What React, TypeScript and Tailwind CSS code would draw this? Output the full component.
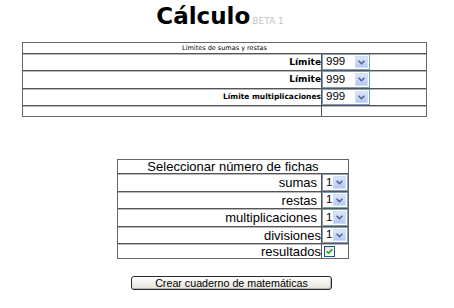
import React from "react";

function Arrow() {
  return (
    <div className="flex h-full w-[13px] items-center justify-center border border-[#d2ddf8] bg-gradient-to-b from-[#dbe5fc] to-[#b6c9f4]">
      <svg width="7" height="5" viewBox="0 0 7 5">
        <path d="M0.6 0.8 L3.5 3.7 L6.4 0.8" fill="none" stroke="#4d6185" strokeWidth="1.5" />
      </svg>
    </div>
  );
}

function Select({ value, w }: { value: string; w: string }) {
  return (
    <div className={`flex h-full items-center border border-[#7f9db9] bg-white p-[1px] ${w}`}>
      <span className="flex-1 pl-[2px] font-['Liberation_Sans',Arial,sans-serif] text-[11.5px] leading-none text-black">
        {value}
      </span>
      <Arrow />
    </div>
  );
}

function TopRow({ label, h, size }: { label: string; h: string; size: string }) {
  return (
    <div className={`flex border-t border-[#555] shadow-[inset_0_1px_0_#b8b8b8] ${h}`}>
      <div
        className={`flex flex-1 items-center justify-end font-['DejaVu_Sans',sans-serif] font-bold leading-none ${size}`}
      >
        {label}
      </div>
      <div className="w-[105px] border-l border-[#555]">
        <Select value="999" w="w-[48px]" />
      </div>
    </div>
  );
}

function BottomRow({ label, h, pad, check }: { label: string; h: string; pad: string; check?: boolean }) {
  return (
    <div className={`flex border-t border-[#555] shadow-[inset_0_1px_0_#b8b8b8] ${h}`}>
      <div
        className={`flex flex-1 items-center justify-end font-['Liberation_Sans',Arial,sans-serif] text-[13px] leading-none ${pad}`}
      >
        {label}
      </div>
      <div className="flex w-[27px] items-center border-l border-[#555]">
        {check ? (
          <div className="ml-[2px] flex h-[11px] w-[11px] items-center justify-center border border-[#1c5180] bg-gradient-to-br from-[#e0e0da] to-white">
            <svg width="7" height="7" viewBox="0 0 7 7">
              <path d="M0.8 3.4 L2.6 5.2 L6.2 1.4" fill="none" stroke="#21a121" strokeWidth="1.6" />
            </svg>
          </div>
        ) : (
          <Select value="1" w="w-[26px]" />
        )}
      </div>
    </div>
  );
}

export default function App() {
  return (
    <div className="h-[308px] w-[454px] bg-white text-black">
      <div className="flex items-baseline justify-center pt-[4px] pr-[14px] leading-none">
        <span className="font-['DejaVu_Sans',sans-serif] text-[23px] font-bold leading-[24px]">Cálculo</span>
        <span className="ml-[2px] font-['DejaVu_Sans',sans-serif] text-[9px] text-[#c4c4c4]">BETA 1</span>
      </div>

      <div className="ml-[22px] mt-[14px] w-[405px] border border-[#666]">
        <div className="flex h-[10px] items-center justify-center font-['DejaVu_Sans',sans-serif] text-[6.5px] leading-none">
          Límites de sumas y restas
        </div>
        <TopRow label="Límite" h="h-[17px]" size="text-[9px]" />
        <TopRow label="Límite" h="h-[18px]" size="text-[9px]" />
        <TopRow label="Límite multiplicaciones" h="h-[17px]" size="text-[7.5px]" />
        <div className="flex h-[11px] border-t border-[#555] shadow-[inset_0_1px_0_#b8b8b8]">
          <div className="flex-1" />
          <div className="w-[105px] border-l border-[#555]" />
        </div>
      </div>

      <div className="ml-[117px] mt-[42px] w-[232px] border border-[#666]">
        <div className="flex h-[13px] items-center justify-center font-['Liberation_Sans',Arial,sans-serif] text-[13px] leading-none">
          Seleccionar número de fichas
        </div>
        <BottomRow label="sumas" h="h-[18px]" pad="pr-[4px]" />
        <BottomRow label="restas" h="h-[17px]" pad="pr-[4px]" />
        <BottomRow label="multiplicaciones" h="h-[18px]" pad="pr-[4px]" />
        <BottomRow label="divisiones" h="h-[17px]" pad="pr-0" />
        <BottomRow label="resultados" h="h-[15px]" pad="pr-0" check />
      </div>

      <div className="ml-[131px] mt-[17px] flex h-[14px] w-[201px] items-center justify-center rounded-[3px] border border-[#2a2a2a] bg-gradient-to-b from-white to-[#e6e4da] shadow-[inset_-1px_-1px_0_#b9b7ab] font-['Liberation_Sans',Arial,sans-serif] text-[10.7px] leading-none">
        Crear cuaderno de matemáticas
      </div>
    </div>
  );
}
